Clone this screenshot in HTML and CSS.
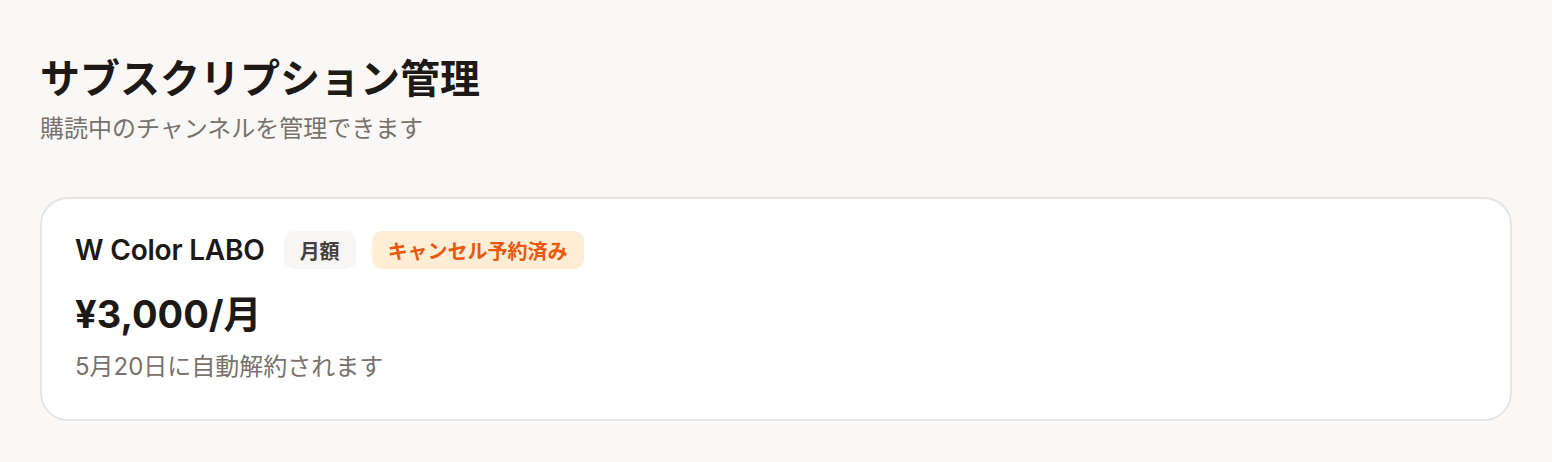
FILE: index.html
```html
<!DOCTYPE html>
<html lang="ja">
<head>
<meta charset="utf-8">
<link rel="stylesheet" href="styles.css">
</head>
<body>
<main class="page">
  <header class="head">
    <h1 class="title">サブスクリプション管理</h1>
    <p class="subtitle">購読中のチャンネルを管理できます</p>
  </header>
  <section class="card">
    <div class="row">
      <span class="name">W Color LABO</span>
      <span class="badge badge-plan">月額</span>
      <span class="badge badge-cancel">キャンセル予約済み</span>
    </div>
    <div class="price">¥3,000/月</div>
    <div class="note">5月20日に自動解約されます</div>
  </section>
</main>
</body>
</html>
```
FILE: styles.css
```css
* { box-sizing: border-box; }
html, body { margin: 0; padding: 0; }
body {
  background: #f9f8f6;
  font-family: Inter, "Noto Sans CJK JP", sans-serif;
  color: #1c1917;
  width: 1552px;
  height: 462px;
  overflow: hidden;
}
.page {
  padding: 53px 40px 0 40px;
}
.head { margin-bottom: 52px; }
.title {
  margin: 0;
  font-size: 40px;
  font-weight: 700;
  line-height: 52px;
  color: #1c1917;
}
.subtitle {
  margin: 8px 0 0 0;
  font-size: 24px;
  line-height: 32px;
  color: #78716c;
}
.card {
  background: #fff;
  border: 2px solid #e7e5e4;
  border-radius: 28px;
  padding: 32px 33px 36px 33px;
  width: 1472px;
}
.row {
  display: flex;
  align-items: center;
  gap: 16px;
}
.name {
  font-size: 28px;
  font-weight: 600;
  letter-spacing: -0.2px;
  margin-right: 3px;
}
.badge {
  display: inline-flex;
  align-items: center;
  height: 38px;
  padding: 0 16px;
  border-radius: 10px;
  font-size: 20px;
  font-weight: 700;
}
.badge-plan { background: #f7f6f4; color: #44403c; }
.badge-cancel { background: #ffedd5; color: #ea580c; }
.price {
  margin-top: 20px;
  font-size: 38px;
  font-weight: 700;
  line-height: 50px;
}
.note {
  margin-top: 12px;
  font-size: 24px;
  line-height: 32px;
  color: #78716c;
}
```
